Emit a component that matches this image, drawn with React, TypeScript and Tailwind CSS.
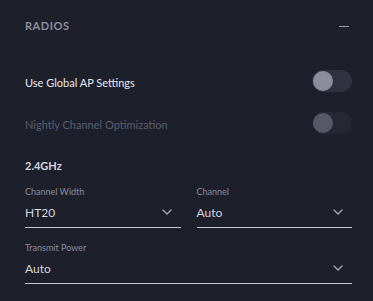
import React from 'react';

function Toggle({ disabled = false }: { disabled?: boolean }) {
  return (
    <div
      className={`flex h-[22px] w-10 items-center rounded-full px-px ${
        disabled ? 'bg-[#252733]' : 'bg-[#30323f]'
      }`}
    >
      <div
        className={`h-5 w-5 rounded-full ${disabled ? 'bg-[#565867]' : 'bg-[#8b8d9d]'}`}
      />
    </div>
  );
}

function Chevron() {
  return (
    <svg width="10" height="6" viewBox="0 0 10 6" fill="none" className="mb-[3px]">
      <path d="M1 1l4 4 4-4" stroke="#a3a5b3" strokeWidth="1.4" strokeLinecap="round" strokeLinejoin="round" />
    </svg>
  );
}

function SelectField({ label, value }: { label: string; value: string }) {
  return (
    <div className="flex flex-col">
      <div className="h-3 text-[9px] leading-3 text-[#8b8d9b]">{label}</div>
      <div className="flex items-center justify-between border-b border-[#c5c7d0] pt-[7px] pb-[6px] pr-[9px]">
        <span className="text-[12px] leading-4 text-[#d3d5de]">{value}</span>
        <Chevron />
      </div>
    </div>
  );
}

export default function App() {
  return (
    <div
      className="h-[301px] w-[373px] bg-[#1d1f2b] pl-[25px] pr-[21px]"
      style={{ fontFamily: 'Lato, "Open Sans", sans-serif' }}
    >
      {/* Section header */}
      <div className="flex items-center justify-between pt-[18px]">
        <span className="text-[11px] font-bold leading-4 tracking-[0.05em] text-[#8e90a0]">RADIOS</span>
        <span className="mr-[3px] h-px w-[10px] bg-[#9b9dab]" />
      </div>

      <div className="mt-[36px] flex items-center justify-between">
        <span className="mt-1 text-[11px] leading-4 text-[#e8e9ee]">Use Global AP Settings</span>
        <Toggle />
      </div>

      <div className="mt-[20px] flex items-center justify-between">
        <span className="mt-1 text-[11px] leading-4 text-[#5b5d6c]">Nightly Channel Optimization</span>
        <Toggle disabled />
      </div>

      <div className="mt-[24px] text-[11px] font-bold leading-4 text-[#d4d6df]">2.4GHz</div>

      <div className="mt-[12px] grid grid-cols-2 gap-x-4">
        <SelectField label="Channel Width" value="HT20" />
        <SelectField label="Channel" value="Auto" />
      </div>

      <div className="mt-[14px]">
        <SelectField label="Transmit Power" value="Auto" />
      </div>
    </div>
  );
}
